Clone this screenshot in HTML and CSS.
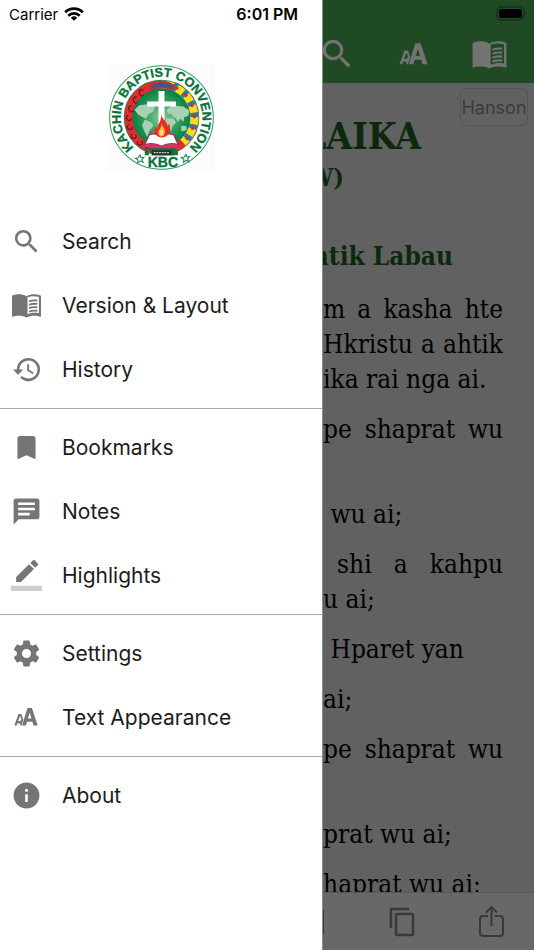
FILE: index.html
```html
<!DOCTYPE html>
<html lang="kac">
<head>
<meta charset="utf-8">
<meta name="viewport" content="width=device-width, initial-scale=1">
<title>KBC Bible</title>
<link rel="stylesheet" href="styles.css">
</head>
<body>
<svg class="defs" aria-hidden="true">
  <symbol id="search" viewBox="0 0 24 24"><path d="M15.5 14h-.79l-.28-.27A6.47 6.47 0 0 0 16 9.5 6.5 6.5 0 1 0 9.5 16c1.61 0 3.09-.59 4.23-1.57l.27.28v.79l5 4.99L20.49 19l-4.99-5zm-6 0a4.5 4.5 0 1 1 0-9 4.5 4.5 0 0 1 0 9z"/></symbol>
  <symbol id="book" viewBox="0 0 30 24"><path fill-rule="evenodd" d="M1 2.5C5 .5 11 .5 15 3c4-2.500 10-2.500 14-.5v20.500c-4-1.500-10-1.500-14 .5-4-2-10-2-14-.5zM16 4v16.500c3.500-1.400 7.500-1.700 11-1V3.700C23.500 2.700 19.500 2.700 16 4z"/><path fill="none" stroke="currentColor" stroke-width="1.800" d="M17.500 8c2.500-1 5-1.200 8-.8M17.500 11.300c2.500-1 5-1.200 8-.8M17.500 14.600c2.500-1 5-1.200 8-.8M17.500 17.900c2.500-1 5-1.200 8-.8"/></symbol>
  <symbol id="letters" viewBox="0 0 24 20"><path fill-rule="evenodd" d="M8 18.500 13.500 1h4.400L23.700 18.500h-4.200l-1.100-3.700h-5.400l-1.100 3.700zM13.900 11.600h3.600l-1.800-6.200zM.3 18.500 4.500 7h2.900l1.900 5.500-1.900 6H6.400l-.7-2.300H3.500l-.7 2.300zM4.200 14h2.200l1-2-1.300-3z"/></symbol>
</svg>
<div class="app">
  <aside class="drawer">
    <div class="status">
      <span class="carrier">Carrier
        <svg class="wifi" viewBox="0 0 20 14" aria-hidden="true"><g fill="none" stroke="currentColor" stroke-width="2.800"><path d="M1.200 5.200a12.500 12.500 0 0 1 17.600 0M4.300 8.700a8.100 8.100 0 0 1 11.400 0"/></g><path d="M10 13.800 6.900 10.700a4.500 4.500 0 0 1 6.200 0z"/></svg>
      </span>
      <time class="clock">6:01 PM</time>
    </div>
    <svg class="logo" viewBox="20 22 320 320" role="img" aria-label="Kachin Baptist Convention">
      <defs>
        <path id="ring" d="M93.700 268.300A122 122 0 1 1 266.300 268.300"/>
        <clipPath id="globe"><circle cx="180" cy="182" r="85"/></clipPath>
        <radialGradient id="sea"><stop offset="0" stop-color="#8fc9a0"/><stop offset=".55" stop-color="#38a05d"/><stop offset="1" stop-color="#078344"/></radialGradient>
      </defs>
      <path fill="#fbfbfb" d="M20 22h320v320H20z"/>
      <circle cx="180" cy="182" r="155" fill="#fff" stroke="#2b9a60" stroke-width="3"/>
      <circle cx="180" cy="182" r="98" fill="#d9252b" stroke="#168247" stroke-width="30"/>
      <circle cx="180" cy="182" r="99" fill="none" stroke="#e52b2e" stroke-width="24"/>
      <path d="M180 83a99 99 0 0 1 64 174" fill="none" stroke="#f6dc22" stroke-width="24"/>
      <path d="M180 83a99 99 0 0 1 64 174" fill="none" stroke="#1483b5" stroke-width="24" stroke-dasharray="13 22"/>
      <path d="M185 83a99 99 0 0 1 68 165" fill="none" stroke="#db2c2d" stroke-width="9" stroke-dasharray="12 23"/>
      <path d="M145 88c20-16 50-18 74 0l-8 12c-20-10-40-10-58 0z" fill="#3a5b89" stroke="#c92d32" stroke-width="5"/>
      <path d="M126 100q-13-5-12 8t14 8m-22 5q-13-2-10 10t15 6m-20 10q-13 1-8 12t15 2m-17 14q-11 5-3 13t13-3m-9 19q-10 8 0 13t11-8m-1 22q-8 10 3 13t8-11m6 20q-4 11 7 11t4-12m11 14q-1 11 9 7" fill="none" stroke="#53242e" stroke-width="4"/>
      <circle cx="180" cy="182" r="85" fill="url(#sea)"/>
      <g clip-path="url(#globe)" fill="#a9d0b2">
        <path d="M99 159l15-14 28-3 18 7-4 15-15 8-7 14-10-5-14-8zM130 188l19 8 7 10-13 17-5 18-8-15-8-20z"/>
        <path d="M195 159l17-13 33 3 19 12-4 16-12 4-2 14-10-9-7 10-8-13-9-2 1-8-14-3zM194 184l22 1 8 12-12 12-3 15-9-17-9-11zM239 207l15 1 2 12-17 3z"/>
      </g>
      <path fill="#fff" d="M171 103h18v31h34v15h-34v59h-18v-59h-34v-15h34z"/>
      <path fill="#fff" stroke="#a42c59" stroke-width="4" d="M143 234c13-5 26-3 37 5 11-8 24-10 37-5l13 29c-17-4-34-4-50 5-16-9-33-9-50-5z"/>
      <path fill="#d23468" d="M129 264c17-6 36-5 51 4 15-9 34-10 51-4l1 8c-19-4-36-2-52 6-16-8-33-10-52-6z"/>
      <path fill="#ee2923" d="M178 171c4 21 21 20 19 39l6-9c9 26-5 40-22 41-18 0-28-18-19-32l5 7c2-18 15-23 11-46z"/>
      <path fill="#ffb33c" d="M180 197c2 14 12 17 10 29-1 7-4 12-10 13-8-2-13-10-8-18 4-7 9-11 8-24z"/>
      <path fill="#fff1a0" d="M181 217c5 8 5 15-1 19-6-5-4-10 1-19z"/>
      <path fill="#11733d" d="M139 274l83 0-4 22h-75zM130 295h22l-8-18-14 4zM229 295h-22l8-18 14 4z"/>
      <path fill="#292f2d" d="M151 280h59v14h-59z"/><path stroke="#dbe5dc" stroke-width="4" stroke-dasharray="5 3" d="M157 287h48"/>
      <text class="logo-ring"><textPath href="#ring" startOffset="50%" text-anchor="middle">KACHIN BAPTIST CONVENTION</textPath></text>
      <text class="logo-kbc" x="184" y="331" text-anchor="middle">KBC</text>
      <path id="star" fill="#fff" stroke="#168247" stroke-width="3" d="M116 294l3 8 8-1-6 7 4 8-9-4-7 6 1-9-8-5 9-2z"/>
      <use href="#star" x="137" y="-2"/>
    </svg>
    <nav class="menu">
      <a href="#"><svg viewBox="0 0 24 24"><use href="#search"/></svg>Search</a>
      <a href="#"><svg class="book" viewBox="0 0 30 24"><use href="#book"/></svg>Version &amp; Layout</a>
      <a href="#"><svg viewBox="0 0 24 24"><path d="M13.500 3a9 9 0 0 0-9 9H1.500l4 4 4-4h-3a7 7 0 1 1 2.050 4.950L7.130 18.370A9 9 0 1 0 13.500 3zM12.500 8v5l4.280 2.540.72-1.210-3.500-2.080V8z"/></svg>History</a>
      <hr>
      <a href="#"><svg viewBox="0 0 24 24"><path d="M17 3H7a2 2 0 0 0-2 2v16l7-3 7 3V5a2 2 0 0 0-2-2z"/></svg>Bookmarks</a>
      <a href="#"><svg viewBox="0 0 24 24"><path d="M20 2H4a2 2 0 0 0-2 2v18l4-4h14a2 2 0 0 0 2-2V4a2 2 0 0 0-2-2zM5.500 5h13v2h-13zm0 4h13v2h-13zm9 6h-9v-2h9z"/></svg>Notes</a>
      <a href="#"><svg viewBox="0 0 24 24"><path d="M17.750 7 14 3.250l-10 10V17h3.750zm2.960-2.960a1 1 0 0 0 0-1.410L18.370.290a1 1 0 0 0-1.410 0L15 2.250 18.750 6z"/><path fill="#cecece" d="M0 20h24v4H0z"/></svg>Highlights</a>
      <hr>
      <a href="#"><svg viewBox="0 0 24 24"><path d="M19.430 12.980c.04-.32.07-.64.07-.98s-.03-.66-.07-.98l2.110-1.650a.5.5 0 0 0 .12-.64l-2-3.460a.5.5 0 0 0-.61-.22l-2.490 1a7.300 7.300 0 0 0-1.690-.98l-.38-2.650A.490.490 0 0 0 14 2h-4a.490.490 0 0 0-.49.420l-.38 2.650c-.61.25-1.170.59-1.690.98l-2.490-1a.5.5 0 0 0-.61.220l-2 3.460a.5.5 0 0 0 .12.640l2.110 1.650c-.04.32-.07.65-.07.98s.03.66.07.98l-2.110 1.650a.5.5 0 0 0-.12.640l2 3.460c.12.220.39.300.61.220l2.490-1c.52.400 1.080.730 1.690.980l.38 2.650c.03.240.24.420.49.420h4c.25 0 .46-.18.49-.42l.38-2.650c.61-.25 1.170-.59 1.690-.98l2.490 1c.23.090.49 0 .61-.22l2-3.460a.5.5 0 0 0-.12-.64zM12 15.500a3.500 3.500 0 1 1 0-7 3.500 3.500 0 0 1 0 7z"/></svg>Settings</a>
      <a href="#"><svg class="letters" viewBox="0 0 24 20"><use href="#letters"/></svg>Text Appearance</a>
      <hr>
      <a href="#"><svg viewBox="0 0 24 24"><path d="M12 2a10 10 0 1 0 0 20 10 10 0 0 0 0-20zm1 15h-2v-6h2zm0-8h-2V7h2z"/></svg>About</a>
    </nav>
  </aside>
  <main class="reader">
    <header class="bar">
      <div class="battery-row"><svg class="battery" viewBox="0 0 32 16" aria-hidden="true"><rect x="1" y="1" width="27" height="13" rx="4" fill="none" stroke="#15351a" stroke-width="1.500"/><rect x="3" y="3" width="23" height="9" rx="2"/><path d="M29.500 5q2 2.500 0 5z" fill="#15351a"/></svg></div>
      <div class="actions">
        <button type="button" aria-label="Search"><svg viewBox="0 0 24 24"><use href="#search"/></svg></button>
        <button type="button" aria-label="Text appearance"><svg class="letters" viewBox="0 0 24 20"><use href="#letters"/></svg></button>
        <button type="button" aria-label="Version and layout"><svg class="book" viewBox="0 0 30 24"><use href="#book"/></svg></button>
      </div>
    </header>
    <article class="page">
      <button class="version" type="button">Hanson</button>
      <h1>LAIKA</h1>
      <p class="subtitle">W)</p>
      <h2>htik Labau</h2>
      <p><span class="full">m a kasha hte</span><span class="full">Hkristu a ahtik</span><span>ika rai nga ai.</span></p>
      <p class="tall"><span class="full">pe shaprat wu</span></p>
      <p><span> wu ai;</span></p>
      <p><span class="full lead">shi a kahpu</span><span>u ai;</span></p>
      <p><span> Hparet yan</span></p>
      <p><span>ai;</span></p>
      <p class="tall"><span class="full">pe shaprat wu</span></p>
      <p><span>prat wu ai;</span></p>
      <p><span>haprat wu ai;</span></p>
    </article>
    <footer class="tools">
      <button type="button" aria-label="Bookmark"><svg viewBox="0 0 32 32"><path d="M7 5h20v22H7z"/></svg></button>
      <button type="button" aria-label="Copy"><svg class="thick" viewBox="0 0 32 32"><path d="M5 22V3h18"/><rect x="10" y="8" width="17" height="21" rx="1"/></svg></button>
      <button type="button" aria-label="Share"><svg viewBox="0 0 32 32"><path d="M12 10H7q-3 0-3 3v14q0 3 3 3h17q3 0 3-3V13q0-3-3-3h-5M15.500 20V1M10 6.500 15.500 1 21 6.500"/></svg></button>
    </footer>
  </main>
</div>
</body>
</html>
```
FILE: styles.css
```css
* { box-sizing: border-box; }
body { margin: 0; font-family: Inter, "Liberation Sans", sans-serif; background: #616161; }
button { border: 0; padding: 0; background: none; font: inherit; color: inherit; }
svg { fill: currentColor; flex: none; }
.defs { position: absolute; width: 0; height: 0; }

.app { display: flex; height: 100vh; overflow: hidden; }

.drawer { width: 60.5%; flex: none; background: #fff; border-right: 1px solid #8c8c8c; color: #1c1c1c; }
.status { display: flex; justify-content: space-between; align-items: center; height: 28px; padding: 0 24px 0 9px; color: #000; font-size: 15px; }
.carrier { display: flex; align-items: center; gap: 6px; }
.wifi { width: 20px; height: 14px; }
.clock { font-size: 16px; font-weight: 600; }
.logo { display: block; width: 107px; height: 107px; margin: 36px auto 38px; }
.logo-ring, .logo-kbc { fill: #08713c; stroke: #08713c; stroke-width: 1px; font-family: "Liberation Sans", Arial, sans-serif; font-weight: bold; }
.logo-ring { font-size: 38px; }
.logo-kbc { font-size: 42px; }

.menu a { display: grid; grid-template-columns: 52px 1fr; column-gap: 10px; align-items: center; height: 64px; color: inherit; font-size: 21px; text-decoration: none; }
.menu svg { width: 31px; height: 31px; justify-self: center; color: #757575; }
.menu .book { width: 31px; height: 25px; }
.menu .letters { width: 24px; height: 20px; }
.menu hr { height: 1px; margin: 7px 0 6px; border: 0; background: #a6a6a6; }

.reader { display: flex; flex: 1; flex-direction: column; min-width: 0; overflow: hidden; background: #616161; }
.bar { flex: none; height: 83px; background: #1f4a23; color: #737373; }
.battery-row { display: flex; justify-content: flex-end; height: 26px; padding: 6px 6px 0 0; }
.battery { width: 32px; height: 16px; fill: #000; }
.actions { display: flex; justify-content: flex-end; padding-right: 7px; }
.actions button { display: grid; place-items: center; flex: none; width: 76px; height: 56px; }
.actions svg { width: 38px; height: 38px; }
.actions .book { width: 37px; height: 29px; }
.actions .letters { width: 29px; height: 24px; }

.page { position: relative; flex: 1; min-height: 0; padding: 29px 31px 0 0; overflow: hidden; color: #000; font-family: "Roboto Slab", "DejaVu Serif Condensed", "DejaVu Serif", serif; font-size: 26px; line-height: 35px; }
.version { position: absolute; top: 5px; right: 6px; width: 68px; height: 38px; border: 1px solid #555; border-radius: 6px; color: #3b3b3b; font-family: Inter, "Liberation Sans", sans-serif; font-size: 18px; }
.page h1, .page h2, .page .subtitle { display: flex; justify-content: flex-end; margin: 0; color: #0c290e; font-weight: bold; white-space: nowrap; }
.page h1 { padding-right: 82px; font-size: 37px; line-height: 48px; }
.page .subtitle { padding-right: 159px; font-size: 25px; line-height: 36px; }
.page h2 { margin: 42px 0 18px; padding-right: 50px; font-size: 26px; line-height: 36px; }
.page p { margin: 0 0 15px; }
.page span { display: block; white-space: pre; }
.page .full { text-align-last: justify; white-space: nowrap; }
.page .lead { padding-left: 14px; }
.page .tall { padding-bottom: 35px; }

.tools { display: flex; flex: none; justify-content: flex-end; gap: 6px; height: 58px; border-top: 1px solid #585858; background: #686868; color: #393939; }
.tools button { display: grid; place-items: center; flex: none; width: 84px; }
.tools svg { width: 32px; height: 32px; fill: none; stroke: currentColor; stroke-width: 2; }
.tools .thick { stroke-width: 2.5; }
```
